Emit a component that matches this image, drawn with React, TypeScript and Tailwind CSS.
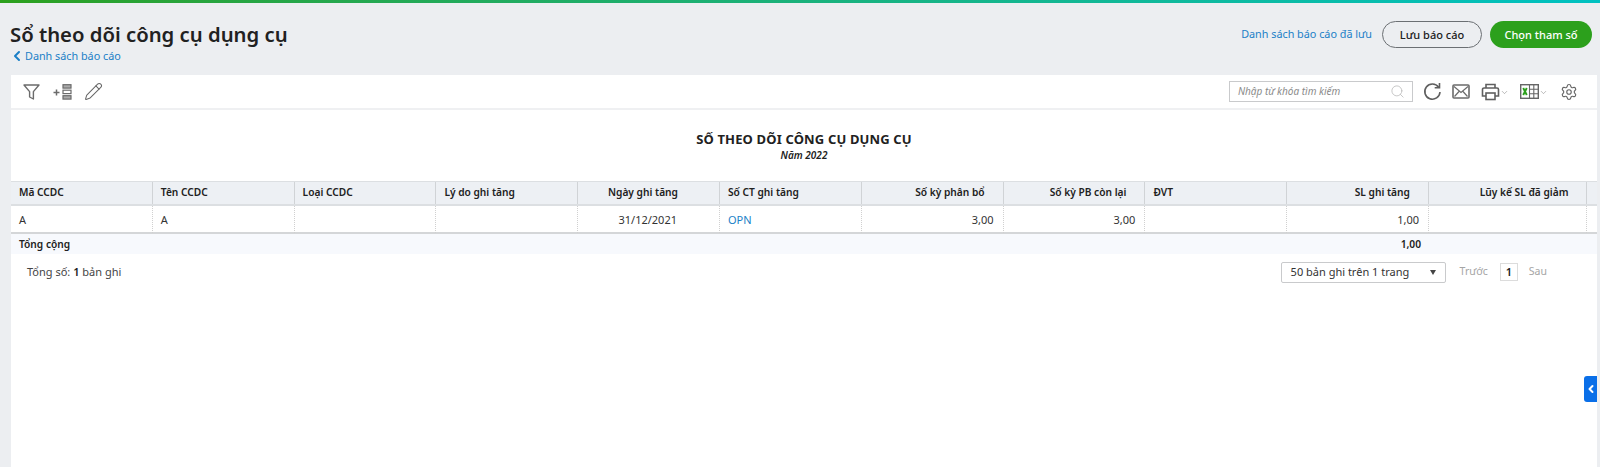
import React from "react";
import { ChevronLeft, ChevronDown, Search, Settings, Pencil } from "lucide-react";

const columns = [
  { label: "Mã CCDC", value: "A" },
  { label: "Tên CCDC", value: "A" },
  { label: "Loại CCDC", value: "" },
  { label: "Lý do ghi tăng", value: "" },
  { label: "Ngày ghi tăng", value: "31/12/2021", date: true },
  { label: "Số CT ghi tăng", value: "OPN", link: true },
  { label: "Số kỳ phân bổ", value: "3,00", right: true },
  { label: "Số kỳ PB còn lại", value: "3,00", right: true },
  { label: "ĐVT", value: "" },
  { label: "SL ghi tăng", value: "1,00", right: true },
  { label: "Lũy kế SL đã giảm", value: "", right: true },
];

const gridCols = "grid grid-cols-[repeat(10,141.8px)_158.5px_1fr]";

const FilterIcon = () => (
  <svg width="17" height="16" viewBox="0 0 17 16" fill="none" stroke="#6b6b6b" strokeWidth="1.4">
    <path d="M1 1h15l-5.6 6.6V15l-3.8-2V7.6z" strokeLinejoin="round" />
  </svg>
);

const AddRowsIcon = () => (
  <svg width="19" height="16" viewBox="0 0 19 16" fill="none" stroke="#6b6b6b">
    <path d="M0.5 8.5h6M3.5 5.5v6" strokeWidth="1.5" />
    <rect x="10" y="0.7" width="8" height="3.4" strokeWidth="1.2" fill="#aaa" />
    <rect x="10" y="6.2" width="8" height="3.4" strokeWidth="1.2" />
    <rect x="10" y="11.7" width="8" height="3.4" strokeWidth="1.2" fill="#aaa" />
  </svg>
);

const RefreshIcon = () => (
  <svg width="19" height="19" viewBox="0 0 19 19" fill="none" stroke="#5f5f5f" strokeWidth="1.6">
    <path d="M15.6 5.2A7.6 7.6 0 1 0 17 10" />
    <path d="M16.5 1v4.8h-4.8" />
  </svg>
);

const MailIcon = () => (
  <svg width="18" height="15" viewBox="0 0 18 15" fill="none" stroke="#6b6b6b">
    <rect x="1" y="1" width="16" height="13" rx="1" strokeWidth="1.6" />
    <path d="M2 2.5l7 6 7-6M2.5 12.5l4.5-5M15.5 12.5l-4.5-5" strokeWidth="1.2" />
  </svg>
);

const PrinterIcon = () => (
  <svg width="19" height="18" viewBox="0 0 19 18" fill="none" stroke="#5f5f5f" strokeWidth="1.6">
    <path d="M5 5V1.5h9V5" />
    <path d="M5 13H1.5V6.5a1.5 1.5 0 0 1 1.5-1.5h13a1.5 1.5 0 0 1 1.5 1.5V13H14" />
    <rect x="5" y="10" width="9" height="6.5" />
  </svg>
);

const ExcelIcon = () => (
  <svg width="19" height="15" viewBox="0 0 19 15" fill="none" stroke="#666">
    <rect x="0.7" y="0.7" width="17.6" height="13.6" strokeWidth="1.4" />
    <path d="M3.2 4l3.6 7M6.8 4l-3.6 7" stroke="#2ca01c" strokeWidth="1.9" />
    <path d="M9.5 0.7v13.6M13.8 0.7v13.6M9.5 5.2h9M9.5 9.8h9" strokeWidth="1.1" />
  </svg>
);

export default function App() {
  return (
    <div className="h-[467px] overflow-hidden bg-[#eceef1] font-['Noto_Sans',sans-serif] text-[#212121]">
      <div className="h-[3px] bg-gradient-to-r from-[#2ca01c] to-[#00c1c1]" />

      <div className="flex h-[72px] justify-between pl-[10px] pr-[8px]">
        <div className="pt-[17px]">
          <h1 className="text-[20.3px] font-semibold leading-[28px]">Sổ theo dõi công cụ dụng cụ</h1>
          <a className="ml-[-1px] flex items-center text-[10.8px] leading-[16px] text-[#1b7fc7]">
            <ChevronLeft size={16} strokeWidth={3} />
            <span>Danh sách báo cáo</span>
          </a>
        </div>
        <div className="flex items-start pt-[18px]">
          <a className="mr-[10px] text-[10.8px] leading-[26px] text-[#1b7fc7]">Danh sách báo cáo đã lưu</a>
          <button className="mr-[8px] h-[27px] w-[100px] rounded-full border border-[#6b6f73] text-[11px] font-medium leading-none">
            Lưu báo cáo
          </button>
          <button className="h-[27px] w-[102px] rounded-full bg-[#2ca01c] text-[11px] font-medium leading-none text-white">
            Chọn tham số
          </button>
        </div>
      </div>

      <div className="ml-[11px] mr-[3px] h-[392px] bg-white">
        <div className="flex h-[35px] items-center justify-between border-b-2 border-[#eff0f2] pl-[12px] pr-[19px]">
          <div className="flex items-center gap-[13px] text-[#666]">
            <FilterIcon />
            <AddRowsIcon />
            <Pencil size={19} strokeWidth={1.3} className="ml-[-1px]" />
          </div>
          <div className="flex items-center text-[#666]">
            <div className="mr-[10px] flex h-[21px] w-[184px] items-center justify-between border border-[#c9cacc] pl-[8px] pr-[7px]">
              <span className="text-[10px] italic text-[#8a8a8a]">Nhập từ khóa tìm kiếm</span>
              <Search size={15} strokeWidth={1.2} className="text-[#b5b5b5]" />
            </div>
            <RefreshIcon />
            <div className="ml-[10px]">
              <MailIcon />
            </div>
            <div className="ml-[11px]">
              <PrinterIcon />
            </div>
            <ChevronDown size={9} strokeWidth={1.5} className="mt-[2px] text-[#888]" />
            <div className="ml-[11px]">
              <ExcelIcon />
            </div>
            <ChevronDown size={9} strokeWidth={1.5} className="mt-[2px] text-[#888]" />
            <Settings size={18} strokeWidth={1.5} className="ml-[12px]" />
          </div>
        </div>

        <div className="h-[71px] pt-[20px] text-center">
          <div className="text-[13px] font-bold leading-[18px] tracking-[0.15px]">SỐ THEO DÕI CÔNG CỤ DỤNG CỤ</div>
          <div className="text-[10px] font-semibold italic leading-[14px]">Năm 2022</div>
        </div>

        <div className={`${gridCols} h-[25px] border-b-2 border-t border-[#dcdfe2] bg-[#edf0f4] text-[10.2px] font-semibold leading-[21px]`}>
          {columns.map((c) => (
            <div
              key={c.label}
              className={`border-r border-[#d0d3d6] pl-2 ${c.right ? "pr-[18px] text-right" : ""} ${c.date ? "pr-[41px] text-right" : ""}`}
            >
              {c.label}
            </div>
          ))}
          <div />
        </div>

        <div className={`${gridCols} h-[28px] border-b-2 border-[#d4d6d8] text-[11px] leading-[27px] text-[#333]`}>
          {columns.map((c) => (
            <div
              key={c.label}
              className={`border-r border-dotted border-[#d0d0d0] pl-2 ${c.right ? "pr-[9px] text-right" : ""} ${c.date ? "pr-[42px] text-right" : ""} ${c.link ? "text-[#1b7fc7]" : ""}`}
            >
              {c.value}
            </div>
          ))}
          <div />
        </div>

        <div className={`${gridCols} h-[20px] bg-[#f7f9fd] text-[10.2px] font-semibold leading-[20px]`}>
          <div className="col-span-9 px-2">Tổng cộng</div>
          <div className="pr-[8px] text-right">1,00</div>
        </div>

        <div className="flex h-[36px] items-center justify-between pl-4 pr-[50px] text-[11px]">
          <div className="text-[#444]">
            Tổng số: <b className="font-semibold text-[#222]">1</b> bản ghi
          </div>
          <div className="flex items-center">
            <div className="flex h-[21px] w-[165px] items-center justify-between rounded-[2px] border border-[#c9cacc] pl-[9px] pr-[9px] text-[#333]">
              <span>50 bản ghi trên 1 trang</span>
              <span className="border-x-[3px] border-t-[5px] border-x-transparent border-t-[#444]" />
            </div>
            <span className="ml-[14px] text-[10.5px] text-[#a5a5a5]">Trước</span>
            <span className="ml-[12px] flex h-[18px] w-[18px] items-center justify-center border border-[#dcdcdc] text-[11px] font-semibold">
              1
            </span>
            <span className="ml-[11px] text-[10.5px] text-[#a5a5a5]">Sau</span>
          </div>
        </div>
      </div>

      <div className="absolute right-[3px] top-[376px] flex h-[26px] w-[13px] items-center justify-center rounded-l-[3px] bg-[#0a6fe8] text-white">
        <ChevronLeft size={12} strokeWidth={4} />
      </div>
    </div>
  );
}
